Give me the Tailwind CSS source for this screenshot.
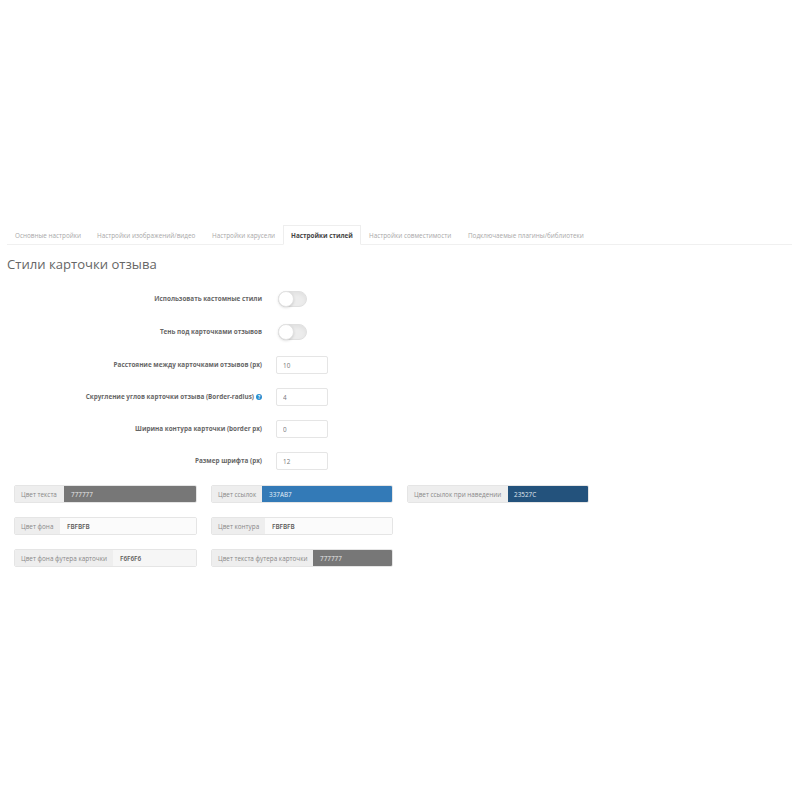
<!DOCTYPE html>
<html lang="ru">
<head>
  <meta charset="UTF-8" />
  <title>Стили карточки отзыва</title>
  <script src="https://cdn.jsdelivr.net/npm/@tailwindcss/browser@4"></script>
</head>
<body class="bg-white text-[#666] font-['Open_Sans',sans-serif]">
  <div class="pt-[225px] pl-[7px] pr-[8px]">

    <!-- Tabs -->
    <div class="flex h-[20px] border-b border-[#f0f0f0] text-[6.35px] text-[#a8a8a8] whitespace-nowrap">
      <a class="h-[20px] w-[82px] pl-[8px] leading-[21px]">Основные настройки</a>
      <a class="h-[20px] w-[115px] pl-[8px] leading-[21px]">Настройки изображений/видео</a>
      <a class="h-[20px] w-[79px] pl-[8px] leading-[21px]">Настройки карусели</a>
      <a class="h-[20px] w-[78px] bg-white border border-[#eeeeee] border-b-white text-center font-bold text-[#444] leading-[19px]">Настройки стилей</a>
      <a class="h-[20px] w-[99px] pl-[8px] leading-[21px]">Настройки совместимости</a>
      <a class="h-[20px] w-[131px] pl-[8px] leading-[21px]">Подключаемые плагины/библиотеки</a>
    </div>

    <h2 class="mt-[9px] text-[13.1px] leading-[20px] text-[#666]">Стили карточки отзыва</h2>

    <!-- Form rows -->
    <div class="mt-[16px] flex flex-col gap-[14px] text-[6.35px] font-bold text-[#666] whitespace-nowrap">
      <div class="flex items-center h-[18px]">
        <label class="w-[255px] text-right">Использовать кастомные стили</label>
        <span class="relative ml-[15.5px] block h-[16px] w-[29px] rounded-full bg-[#ececec] border border-[#e0e0e0] shadow-inner">
          <span class="absolute left-[-1px] top-[-1px] h-[16px] w-[16px] rounded-full bg-white border border-[#e2e2e2] shadow-sm"></span>
        </span>
      </div>
      <div class="flex items-center h-[18px] mt-[1px]">
        <label class="w-[255px] text-right">Тень под карточками отзывов</label>
        <span class="relative ml-[15.5px] block h-[16px] w-[29px] rounded-full bg-[#ececec] border border-[#e0e0e0] shadow-inner">
          <span class="absolute left-[-1px] top-[-1px] h-[16px] w-[16px] rounded-full bg-white border border-[#e2e2e2] shadow-sm"></span>
        </span>
      </div>
      <div class="flex items-center h-[18px] mt-[1px]">
        <label class="w-[255px] text-right">Расстояние между карточками отзывов (px)</label>
        <input value="10" class="ml-[14px] h-[18px] w-[52px] rounded-[2px] border border-[#e5e5e5] bg-white px-[6px] text-[6.35px] font-normal text-[#777]" />
      </div>
      <div class="flex items-center h-[18px]">
        <label class="w-[255px] flex items-center justify-end gap-[2px]">Скругление углов карточки отзыва (Border-radius)
          <svg class="h-[6px] w-[6px]" viewBox="0 0 12 12"><circle cx="6" cy="6" r="6" fill="#2b8fd0"/><text x="6" y="9.5" text-anchor="middle" font-size="9" font-weight="700" fill="#fff">?</text></svg>
        </label>
        <input value="4" class="ml-[14px] h-[18px] w-[52px] rounded-[2px] border border-[#e5e5e5] bg-white px-[6px] text-[6.35px] font-normal text-[#777]" />
      </div>
      <div class="flex items-center h-[18px]">
        <label class="w-[255px] text-right">Ширина контура карточки (border px)</label>
        <input value="0" class="ml-[14px] h-[18px] w-[52px] rounded-[2px] border border-[#e5e5e5] bg-white px-[6px] text-[6.35px] font-normal text-[#777]" />
      </div>
      <div class="flex items-center h-[18px]">
        <label class="w-[255px] text-right">Размер шрифта (px)</label>
        <input value="12" class="ml-[14px] h-[18px] w-[52px] rounded-[2px] border border-[#e5e5e5] bg-white px-[6px] text-[6.35px] font-normal text-[#777]" />
      </div>
    </div>

    <!-- Colour pickers -->
    <div class="mt-[15px] ml-[7px] grid grid-cols-[183px_182px_182px] gap-x-[14px] gap-y-[14px] text-[6.35px] whitespace-nowrap">
      <div class="flex h-[18px] rounded-[2px] border border-[#e5e5e5] overflow-hidden">
        <span class="w-[49px] shrink-0 bg-[#eeeeee] pl-[6px] leading-[17px] text-[#888]">Цвет текста</span>
        <span class="flex-1 bg-[#777777] pl-[7px] leading-[17px] text-[#e8e8e8]">777777</span>
      </div>
      <div class="flex h-[18px] rounded-[2px] border border-[#e5e5e5] overflow-hidden">
        <span class="w-[50px] shrink-0 bg-[#eeeeee] pl-[6px] leading-[17px] text-[#888]">Цвет ссылок</span>
        <span class="flex-1 bg-[#337ab7] pl-[7px] leading-[17px] text-[#e8f0f8]">337AB7</span>
      </div>
      <div class="flex h-[18px] rounded-[2px] border border-[#e5e5e5] overflow-hidden">
        <span class="w-[100px] shrink-0 bg-[#eeeeee] pl-[6px] leading-[17px] text-[#888]">Цвет ссылок при наведении</span>
        <span class="flex-1 bg-[#23527c] pl-[6px] leading-[17px] text-[#e0e8f0]">23527C</span>
      </div>

      <div class="flex h-[18px] rounded-[2px] border border-[#e5e5e5] overflow-hidden">
        <span class="w-[45px] shrink-0 bg-[#eeeeee] pl-[6px] leading-[17px] text-[#888]">Цвет фона</span>
        <span class="flex-1 bg-[#fbfbfb] pl-[7px] leading-[17px] font-semibold text-[#555]">FBFBFB</span>
      </div>
      <div class="flex h-[18px] rounded-[2px] border border-[#e5e5e5] overflow-hidden">
        <span class="w-[53px] shrink-0 bg-[#eeeeee] pl-[6px] leading-[17px] text-[#888]">Цвет контура</span>
        <span class="flex-1 bg-[#fbfbfb] pl-[7px] leading-[17px] font-semibold text-[#555]">FBFBFB</span>
      </div>
      <div></div>

      <div class="flex h-[18px] rounded-[2px] border border-[#e5e5e5] overflow-hidden">
        <span class="w-[98px] shrink-0 bg-[#eeeeee] pl-[6px] leading-[17px] text-[#888]">Цвет фона футера карточки</span>
        <span class="flex-1 bg-[#f6f6f6] pl-[7px] leading-[17px] font-semibold text-[#555]">F6F6F6</span>
      </div>
      <div class="flex h-[18px] rounded-[2px] border border-[#e5e5e5] overflow-hidden">
        <span class="w-[101px] shrink-0 bg-[#eeeeee] pl-[6px] leading-[17px] text-[#888]">Цвет текста футера карточки</span>
        <span class="flex-1 bg-[#777777] pl-[7px] leading-[17px] text-[#e8e8e8]">777777</span>
      </div>
    </div>
  </div>
</body>
</html>
